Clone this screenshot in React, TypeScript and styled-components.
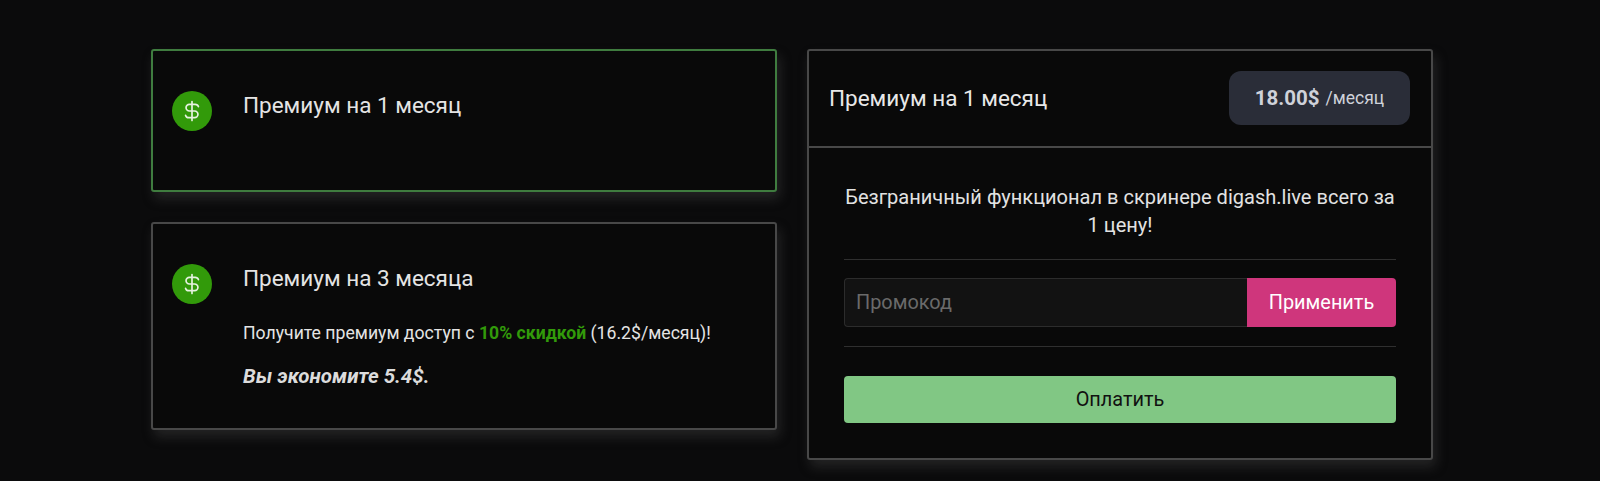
import * as React from "react";
import styled, { createGlobalStyle } from "styled-components";

const GlobalStyle = createGlobalStyle`
  html, body {
    margin: 0;
    background: #0b0b0c;
  }
  body {
    font-family: Roboto, "Liberation Sans", sans-serif;
    color: #e2e2e2;
  }
  * {
    box-sizing: border-box;
  }
`;

const DollarIcon = () => (
  <svg width="24" height="24" viewBox="0 0 24 24" fill="none" stroke="currentColor" strokeWidth="1.7" strokeLinecap="round" strokeLinejoin="round">
    <path d="M18.4 7.6a3.4 3.4 0 0 0-3.2-2.3H9.4a3.35 3.35 0 0 0 0 6.7h5.2a3.35 3.35 0 0 1 0 6.7H8.8a3.4 3.4 0 0 1-3.2-2.3" />
    <path d="M12 2.5v19" />
  </svg>
);

type PlanProps = {
  active?: boolean;
  title: string;
  children?: React.ReactNode;
};

const Plan = ({ active, title, children }: PlanProps) => (
  <PlanCard $active={active}>
    <IconCircle>
      <DollarIcon />
    </IconCircle>
    <PlanBody>
      <PlanTitle>{title}</PlanTitle>
      {children}
    </PlanBody>
  </PlanCard>
);

export default function App() {
  return (
    <>
      <GlobalStyle />
      <Page>
        <PlansColumn>
          <Plan active title="Премиум на 1 месяц" />
          <Plan title="Премиум на 3 месяца">
            <PlanText>
              Получите премиум доступ с <Discount>10% скидкой</Discount> (16.2$/месяц)!
            </PlanText>
            <Saving>Вы экономите 5.4$.</Saving>
          </Plan>
        </PlansColumn>
        <OrderCard>
          <OrderHeader>
            <OrderTitle>Премиум на 1 месяц</OrderTitle>
            <PriceBadge>
              <Price>18.00$</Price>
              <Period>/месяц</Period>
            </PriceBadge>
          </OrderHeader>
          <OrderBody>
            <Description>
              Безграничный функционал в скринере digash.live всего за 1 цену!
            </Description>
            <TopDivider />
            <PromoRow>
              <PromoInput placeholder="Промокод" />
              <ApplyButton>Применить</ApplyButton>
            </PromoRow>
            <BottomDivider />
            <PayButton>Оплатить</PayButton>
          </OrderBody>
        </OrderCard>
      </Page>
    </>
  );
}

const Page = styled.div`
  display: flex;
  align-items: flex-start;
  gap: 30px;
  height: 481px;
  padding: 49px 0 0 151px;
  overflow: hidden;
`;

const PlansColumn = styled.div`
  display: flex;
  flex-direction: column;
  gap: 30px;
  width: 626px;
`;

const PlanCard = styled.div<{ $active?: boolean }>`
  display: flex;
  gap: 31px;
  min-height: 143px;
  padding: 40px 19px 39px;
  background: #090909;
  border: 2px solid ${(p) => (p.$active ? "#3f7c3f" : "#484848")};
  border-radius: 3px;
  box-shadow: 3px 7px 12px rgba(80, 80, 80, 0.35);
`;

const IconCircle = styled.div`
  display: flex;
  flex-shrink: 0;
  align-items: center;
  justify-content: center;
  width: 40px;
  height: 40px;
  color: #e6f2e0;
  background: #329a0a;
  border-radius: 50%;
`;

const PlanBody = styled.div`
  display: flex;
  flex-direction: column;
`;

const PlanTitle = styled.div`
  font-size: 22.5px;
  line-height: 28px;
  color: #e4e4e4;
`;

const PlanText = styled.div`
  margin-top: 30px;
  font-size: 17.65px;
  line-height: 22px;
  color: #e4e4e4;
`;

const Discount = styled.b`
  font-weight: 700;
  color: #329a0a;
`;

const Saving = styled.div`
  margin-top: 19px;
  font-size: 20.5px;
  line-height: 26px;
  font-style: italic;
  font-weight: 700;
  color: #dcdcdc;
`;

const OrderCard = styled.div`
  width: 626px;
  background: #090909;
  border: 2px solid #484848;
  border-radius: 3px;
  box-shadow: 3px 7px 12px rgba(80, 80, 80, 0.35);
`;

const OrderHeader = styled.div`
  display: flex;
  align-items: center;
  justify-content: space-between;
  height: 97px;
  padding: 0 21px 2px 20px;
  border-bottom: 2px solid #484848;
`;

const OrderTitle = styled.div`
  font-size: 22.5px;
  color: #e8e8e8;
`;

const PriceBadge = styled.div`
  display: flex;
  align-items: center;
  justify-content: center;
  gap: 6px;
  width: 181px;
  height: 54px;
  color: #cfd2da;
  background: #2a2d38;
  border-radius: 12px;
`;

const Price = styled.span`
  font-size: 20.5px;
  font-weight: 700;
`;

const Period = styled.span`
  font-size: 17.5px;
`;

const OrderBody = styled.div`
  display: flex;
  flex-direction: column;
  padding: 36px 35px 35px;
`;

const Description = styled.div`
  font-size: 20.05px;
  line-height: 27.5px;
  text-align: center;
  color: #e2e2e2;
`;

const TopDivider = styled.div`
  height: 1px;
  margin: 20px 0 18px;
  background: #2f2f2f;
`;

const BottomDivider = styled.div`
  height: 1px;
  margin: 19px 0 29px;
  background: #2f2f2f;
`;

const PromoRow = styled.div`
  display: flex;
  height: 49px;
`;

const PromoInput = styled.input`
  flex: 1;
  min-width: 0;
  padding: 0 11px;
  font-family: inherit;
  font-size: 19.9px;
  color: #e2e2e2;
  background: #121212;
  border: 1px solid #2c2c2c;
  border-right: none;
  border-radius: 4px 0 0 4px;
  outline: none;
  &::placeholder {
    color: #6a6a6a;
    opacity: 1;
  }
`;

const ApplyButton = styled.button`
  width: 149px;
  font-family: inherit;
  font-size: 19.9px;
  color: #fff;
  background: #cf367c;
  border: none;
  border-radius: 0 4px 4px 0;
`;

const PayButton = styled.button`
  height: 47px;
  font-family: inherit;
  font-size: 19.9px;
  color: #111;
  background: #81c784;
  border: none;
  border-radius: 4px;
`;
